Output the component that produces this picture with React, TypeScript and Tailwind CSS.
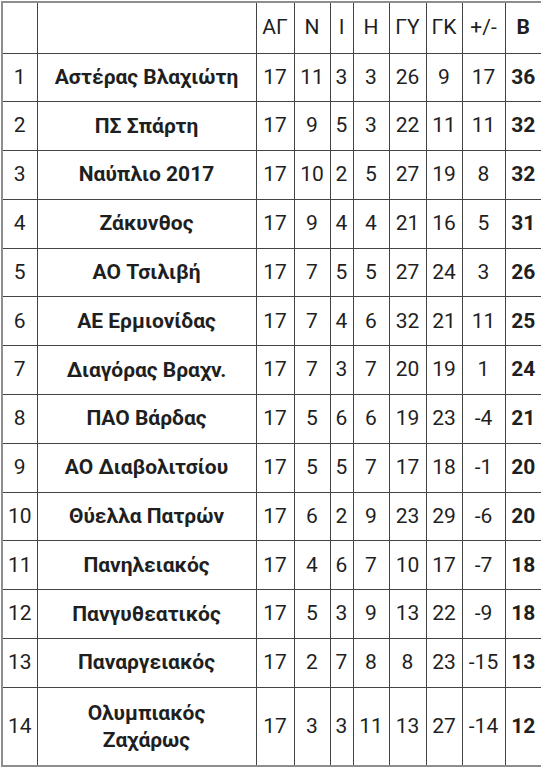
import * as React from 'react';

type Row = [number, string[], number, number, number, number, number, number, number, number];

const rows: Row[] = [
  [1, ['Αστέρας Βλαχιώτη'], 17, 11, 3, 3, 26, 9, 17, 36],
  [2, ['ΠΣ Σπάρτη'], 17, 9, 5, 3, 22, 11, 11, 32],
  [3, ['Ναύπλιο 2017'], 17, 10, 2, 5, 27, 19, 8, 32],
  [4, ['Ζάκυνθος'], 17, 9, 4, 4, 21, 16, 5, 31],
  [5, ['ΑΟ Τσιλιβή'], 17, 7, 5, 5, 27, 24, 3, 26],
  [6, ['ΑΕ Ερμιονίδας'], 17, 7, 4, 6, 32, 21, 11, 25],
  [7, ['Διαγόρας Βραχν.'], 17, 7, 3, 7, 20, 19, 1, 24],
  [8, ['ΠΑΟ Βάρδας'], 17, 5, 6, 6, 19, 23, -4, 21],
  [9, ['ΑΟ Διαβολιτσίου'], 17, 5, 5, 7, 17, 18, -1, 20],
  [10, ['Θύελλα Πατρών'], 17, 6, 2, 9, 23, 29, -6, 20],
  [11, ['Πανηλειακός'], 17, 4, 6, 7, 10, 17, -7, 18],
  [12, ['Πανγυθεατικός'], 17, 5, 3, 9, 13, 22, -9, 18],
  [13, ['Παναργειακός'], 17, 2, 7, 8, 8, 23, -15, 13],
  [14, ['Ολυμπιακός', 'Ζαχάρως'], 17, 3, 3, 11, 13, 27, -14, 12],
];

const widths = [34, 219, 38, 36, 23, 36, 37, 36, 43, 36];
const headers = ['', '', 'ΑΓ', 'Ν', 'Ι', 'Η', 'ΓΥ', 'ΓΚ', '+/-', 'Β'];

export default function App() {
  return (
    <div className="w-[541px] h-[768px] overflow-hidden bg-white pt-[1px] pl-[1px]">
      <div className="border-l-2 border-t-2 border-b-2 border-[#8e8e8e] w-[540px]">
        <table
          className="table-fixed border-collapse w-[538px] text-[#1f1f1f] text-[21px] text-center"
          style={{ fontFamily: 'Roboto, "Noto Sans", sans-serif' }}
        >
          <colgroup>
            {widths.map((w, i) => (
              <col key={i} style={{ width: w }} />
            ))}
          </colgroup>
          <thead>
            <tr className="h-[50px]">
              {headers.map((h, i) => (
                <th
                  key={i}
                  className={
                    'p-0 border-b border-[#444] ' +
                    (i === 0 ? '' : 'border-l ') +
                    (i === 9 ? 'font-bold' : 'font-normal')
                  }
                >
                  {h}
                </th>
              ))}
            </tr>
          </thead>
          <tbody>
            {rows.map((r, ri) => {
              const last = ri === rows.length - 1;
              return (
                <tr key={r[0]} className={last ? 'h-[78px]' : 'h-[48.8px]'}>
                  <td className={'p-0 border-[#444] ' + (last ? '' : 'border-b')}>{r[0]}</td>
                  <td className={'p-0 border-l border-[#444] font-bold leading-[27px] ' + (last ? '' : 'border-b')}>
                    {r[1].map((l) => (
                      <div key={l}>{l}</div>
                    ))}
                  </td>
                  {r.slice(2).map((v, ci) => (
                    <td
                      key={ci}
                      className={
                        'p-0 border-l border-[#444] ' +
                        (last ? '' : 'border-b ') +
                        (ci === 7 ? 'font-bold' : '')
                      }
                    >
                      {v as number}
                    </td>
                  ))}
                </tr>
              );
            })}
          </tbody>
        </table>
      </div>
    </div>
  );
}
